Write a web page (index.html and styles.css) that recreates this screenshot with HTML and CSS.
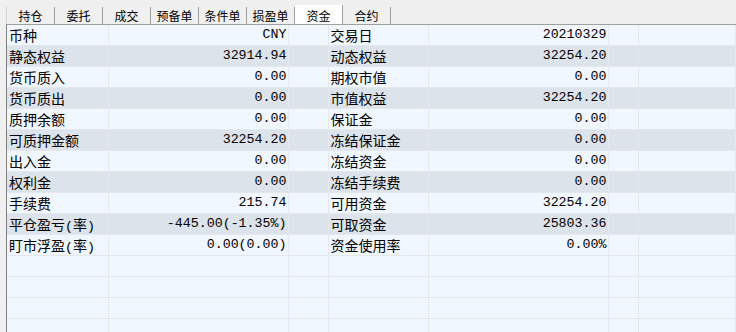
FILE: index.html
```html
<!DOCTYPE html>
<html>
<head>
<meta charset="utf-8">
<link rel="stylesheet" href="styles.css">
</head>
<body>
<div class="tabs">
  <div class="tab first">持仓</div>
  <div class="tab">委托</div>
  <div class="tab">成交</div>
  <div class="tab">预备单</div>
  <div class="tab">条件单</div>
  <div class="tab">损盈单</div>
  <div class="tab active">资金</div>
  <div class="tab">合约</div>
</div>
<div class="panel">
<table class="grid">
  <colgroup>
    <col class="c-label1"><col class="c-val"><col class="c-gap1"><col class="c-label2"><col class="c-val"><col class="c-gap2"><col>
  </colgroup>
  <tbody>
    <tr><td class="lbl">币种</td><td class="num">CNY</td><td></td><td class="lbl">交易日</td><td class="num">20210329</td><td></td><td></td></tr>
    <tr class="alt"><td class="lbl">静态权益</td><td class="num">32914.94</td><td></td><td class="lbl">动态权益</td><td class="num">32254.20</td><td></td><td></td></tr>
    <tr><td class="lbl">货币质入</td><td class="num">0.00</td><td></td><td class="lbl">期权市值</td><td class="num">0.00</td><td></td><td></td></tr>
    <tr class="alt"><td class="lbl">货币质出</td><td class="num">0.00</td><td></td><td class="lbl">市值权益</td><td class="num">32254.20</td><td></td><td></td></tr>
    <tr><td class="lbl">质押余额</td><td class="num">0.00</td><td></td><td class="lbl">保证金</td><td class="num">0.00</td><td></td><td></td></tr>
    <tr class="alt"><td class="lbl">可质押金额</td><td class="num">32254.20</td><td></td><td class="lbl">冻结保证金</td><td class="num">0.00</td><td></td><td></td></tr>
    <tr><td class="lbl">出入金</td><td class="num">0.00</td><td></td><td class="lbl">冻结资金</td><td class="num">0.00</td><td></td><td></td></tr>
    <tr class="alt"><td class="lbl">权利金</td><td class="num">0.00</td><td></td><td class="lbl">冻结手续费</td><td class="num">0.00</td><td></td><td></td></tr>
    <tr><td class="lbl">手续费</td><td class="num">215.74</td><td></td><td class="lbl">可用资金</td><td class="num">32254.20</td><td></td><td></td></tr>
    <tr class="alt"><td class="lbl">平仓盈亏<span class="p">(</span>率<span class="p">)</span></td><td class="num">-445.00(-1.35%)</td><td></td><td class="lbl">可取资金</td><td class="num">25803.36</td><td></td><td></td></tr>
    <tr><td class="lbl">盯市浮盈<span class="p">(</span>率<span class="p">)</span></td><td class="num">0.00(0.00)</td><td></td><td class="lbl">资金使用率</td><td class="num">0.00%</td><td></td><td></td></tr>
    <tr><td></td><td></td><td></td><td></td><td></td><td></td><td></td></tr>
    <tr><td></td><td></td><td></td><td></td><td></td><td></td><td></td></tr>
    <tr><td></td><td></td><td></td><td></td><td></td><td></td><td></td></tr>
    <tr><td></td><td></td><td></td><td></td><td></td><td></td><td></td></tr>
  </tbody>
</table>
</div>
</body>
</html>
```
FILE: styles.css
```css
html, body {
  margin: 0;
  padding: 0;
  width: 736px;
  height: 332px;
  overflow: hidden;
  background: #f0f0f0;
  font-family: "Noto Sans CJK SC", "Noto Sans", sans-serif;
  color: #000;
}
.tabs {
  display: flex;
  align-items: flex-end;
  height: 24px;
  padding-left: 6px;
  box-sizing: border-box;
}
.tab {
  width: 47px;
  height: 17px;
  border-right: 1px solid #a0a0a0;
  font-size: 12px;
  line-height: 18px;
  text-align: center;
  background: #f0f0f0;
}
.tab.first {
  border-left: 1px solid #d4d4d4;
}
.tab.active {
  background: #ffffff;
  height: 19px;
  line-height: 21px;
}
.panel {
  margin-left: 6px;
  border-left: 1px solid #808080;
  border-top: 1px solid #a0a0a0;
  height: 307px;
  overflow: hidden;
  background: #f0f7ff;
}
.grid {
  border-collapse: collapse;
  table-layout: fixed;
  width: 729px;
}
.c-label1 { width: 101px; }
.c-val { width: 180px; }
.c-gap1 { width: 40px; }
.c-label2 { width: 100px; }
.c-gap2 { width: 30px; }
.grid td {
  height: 20px;
  padding: 0;
  border-right: 1px solid #e4e9ef;
  border-bottom: 1px solid #e4e8ed;
  background: #f0f7ff;
  white-space: nowrap;
  overflow: hidden;
  box-sizing: content-box;
}
.grid tr.alt td {
  background: #dce3ea;
}
.grid td.lbl {
  font-size: 14px;
  line-height: 20px;
  padding-left: 2px;
}
.grid td.lbl .p {
  font-family: "Liberation Mono", monospace;
  font-size: 13.3px;
  line-height: 12px;
}
.grid td.num {
  font-family: "Liberation Mono", monospace;
  font-size: 13.3px;
  line-height: 20px;
  text-align: right;
  padding-right: 1px;
}
```
